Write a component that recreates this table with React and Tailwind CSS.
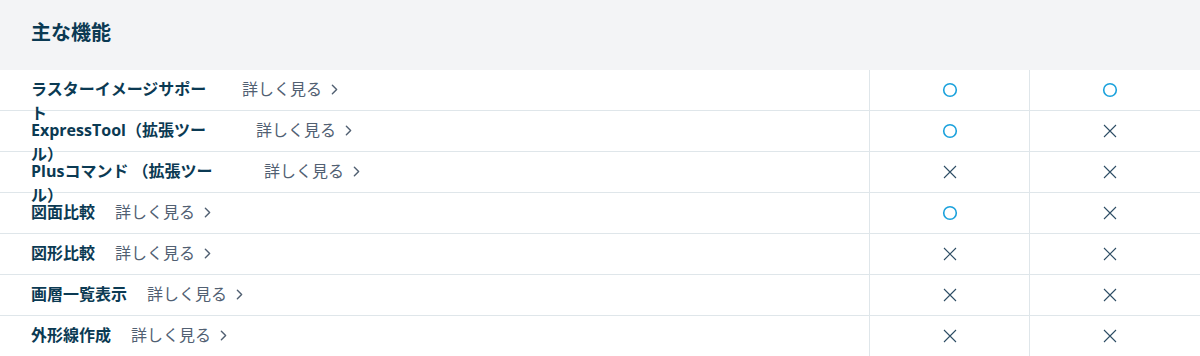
import { ChevronRight } from 'lucide-react';

const rows = [
    { name: ['ラスターイメージサポー', 'ト'], w: 'w-[191px]', a: true, b: true },
    { name: ['ExpressTool（拡張ツー', 'ル）'], w: 'w-[205px]', a: true, b: false },
    { name: ['Plusコマンド （拡張ツー', 'ル）'], w: 'w-[213px]', a: false, b: false },
    { name: ['図面比較'], w: '', a: true, b: false },
    { name: ['図形比較'], w: '', a: false, b: false },
    { name: ['画層一覧表示'], w: '', a: false, b: false },
    { name: ['外形線作成'], w: '', a: false, b: false },
];

function Circle() {
    return (
        <svg width="16" height="16" viewBox="0 0 16 16" fill="none">
            <circle cx="8" cy="8" r="6.3" stroke="#1aa1dc" strokeWidth="1.6" />
        </svg>
    );
}

function Cross() {
    return (
        <svg width="14" height="14" viewBox="0 0 14 14" fill="none">
            <path d="M1 1L13 13M13 1L1 13" stroke="#2d4d64" strokeWidth="1.1" />
        </svg>
    );
}

export default function App() {
    return (
        <div className="w-[1200px] h-[356px] overflow-hidden bg-white font-['Open_Sans','Noto_Sans_CJK_JP',sans-serif]">
            <div className="h-[70px] bg-[#f3f4f6] flex items-center px-[31px]">
                <h2 className="text-[20px] font-bold text-[#0b3a53] leading-[30px] pb-[5px]">主な機能</h2>
            </div>
            {rows.map((r) => (
                <div key={r.name[0]} className="flex h-[41px] border-b border-[#dfe6ea]">
                    <div className="w-[870px] flex items-start gap-5 pl-[31px] pt-[7px] border-r border-[#dfe6ea]">
                        <span className={`${r.w} shrink-0 flex flex-col text-[16px] font-bold leading-[24px] text-[#0b3a53] whitespace-nowrap`}>
                            {r.name.map((line) => (
                                <span key={line}>{line}</span>
                            ))}
                        </span>
                        <a className="flex items-center gap-[4px] text-[16px] leading-[24px] text-[#516072] whitespace-nowrap">
                            詳しく見る
                            <ChevronRight size={17} strokeWidth={2} className="text-[#516072]" />
                        </a>
                    </div>
                    <div className="w-[160px] flex items-center justify-center border-r border-[#dfe6ea]">
                        {r.a ? <Circle /> : <Cross />}
                    </div>
                    <div className="w-[160px] flex items-center justify-center">
                        {r.b ? <Circle /> : <Cross />}
                    </div>
                </div>
            ))}
        </div>
    );
}
